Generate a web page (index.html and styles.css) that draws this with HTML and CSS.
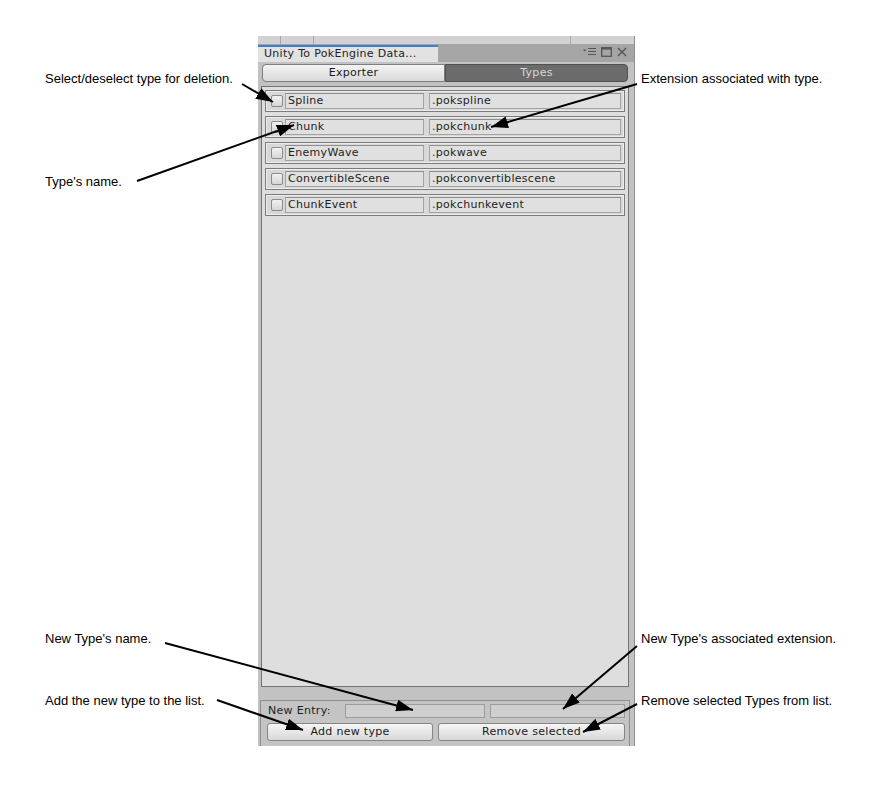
FILE: index.html
```html
<!DOCTYPE html>
<html>
<head>
<meta charset="utf-8">
<link rel="stylesheet" href="styles.css">
</head>
<body>
<div class="page">
  <div class="window">
    <div class="topstrip"><span class="tick t1"></span><span class="tick t2"></span><span class="tick t3"></span></div>
    <div class="titlebar">
      <div class="tab">Unity To PokEngine Data...</div>
      <div class="winicons">
        <svg width="13" height="9" viewBox="0 0 13 9"><path d="M0 2.5h3.5L1.75 4.5z" fill="#555"/><path d="M5 1.5h8M5 4.5h8M5 7.5h8" stroke="#555" stroke-width="1.2"/></svg>
        <svg width="11" height="10" viewBox="0 0 11 10"><rect x="0.7" y="0.7" width="9.6" height="8.6" fill="none" stroke="#555" stroke-width="1.3"/><path d="M0.7 1.8h9.6" stroke="#555" stroke-width="1.5"/></svg>
        <svg width="10" height="10" viewBox="0 0 10 10"><path d="M1 1L9 9M9 1L1 9" stroke="#555" stroke-width="1.4"/></svg>
      </div>
    </div>
    <div class="toolbar">
      <div class="seg seg-left">Exporter</div>
      <div class="seg seg-right">Types</div>
    </div>
    <div class="list">
      <div class="row"><span class="check"></span><span class="field name">Spline</span><span class="field ext">.pokspline</span></div>
      <div class="row"><span class="check"></span><span class="field name">Chunk</span><span class="field ext">.pokchunk</span></div>
      <div class="row"><span class="check"></span><span class="field name">EnemyWave</span><span class="field ext">.pokwave</span></div>
      <div class="row"><span class="check"></span><span class="field name">ConvertibleScene</span><span class="field ext">.pokconvertiblescene</span></div>
      <div class="row"><span class="check"></span><span class="field name">ChunkEvent</span><span class="field ext">.pokchunkevent</span></div>
    </div>
    <div class="bottom">
      <div class="entry">
        <span class="entry-label">New Entry:</span>
        <span class="efield ef1"></span>
        <span class="efield ef2"></span>
      </div>
      <div class="buttons">
        <div class="btn btn-add">Add new type</div>
        <div class="btn btn-remove">Remove selected</div>
      </div>
    </div>
  </div>

  <div class="note n1">Select/deselect type for deletion.</div>
  <div class="note n2">Type's name.</div>
  <div class="note n3">Extension associated with type.</div>
  <div class="note n4">New Type's name.</div>
  <div class="note n5">Add the new type to the list.</div>
  <div class="note n6">New Type's associated extension.</div>
  <div class="note n7">Remove selected Types from list.</div>

  <svg class="arrows" width="894" height="786" viewBox="0 0 894 786">
    <defs>
      <marker id="ah" markerWidth="17" markerHeight="12" refX="17" refY="6" orient="auto" markerUnits="userSpaceOnUse">
        <path d="M0 0L17 6L0 12z" fill="#000"/>
      </marker>
    </defs>
    <g stroke="#000" stroke-width="2" fill="none" marker-end="url(#ah)">
      <line x1="242" y1="84" x2="273" y2="102"/>
      <line x1="137" y1="181" x2="294" y2="125"/>
      <line x1="637" y1="84" x2="491" y2="127"/>
      <line x1="165" y1="643" x2="413" y2="710"/>
      <line x1="217" y1="700" x2="303" y2="730"/>
      <line x1="637" y1="646" x2="563" y2="709"/>
      <line x1="637" y1="704" x2="583" y2="732"/>
    </g>
  </svg>
</div>
</body>
</html>
```

FILE: styles.css
```css
* { box-sizing: border-box; }
html, body { margin: 0; padding: 0; background: #fff; }
.page {
  position: relative;
  width: 894px;
  height: 786px;
  padding-top: 36px;
  padding-left: 258px;
  font-family: "DejaVu Sans", sans-serif;
  font-size: 11px;
  letter-spacing: 0.3px;
  color: #1e1e1e;
}
.window {
  width: 377px;
  height: 710px;
  background: #c2c2c2;
  border-right: 1px solid #8e8e8e;
  display: flex;
  flex-direction: column;
}
.topstrip {
  position: relative;
  height: 8px;
  background: #d2d2d2;
}
.tick { position: absolute; top: 0; width: 1px; height: 8px; background: #a8a8a8; }
.t1 { left: 22px; }
.t2 { left: 55px; }
.t3 { left: 312px; }
.titlebar {
  height: 18px;
  background: #a5a5a5;
  display: flex;
  align-items: flex-end;
  justify-content: space-between;
}
.tab {
  width: 180px;
  height: 17px;
  background: #e2e2e2;
  border-top: 2px solid #3f7fd2;
  padding-left: 6px;
  line-height: 14px;
  color: #222;
  white-space: nowrap;
}
.winicons {
  display: flex;
  align-items: center;
  gap: 5px;
  height: 18px;
  padding-right: 7px;
  padding-bottom: 3px;
}
.toolbar {
  height: 24px;
  padding: 2px 6px 0 4px;
  display: flex;
}
.seg {
  height: 18px;
  line-height: 16px;
  text-align: center;
  flex: 1 1 0;
}
.seg-left {
  background: linear-gradient(#f4f4f4, #d9d9d9);
  border: 1px solid #7f7f7f;
  border-radius: 4px 0 0 4px;
  color: #1a1a1a;
}
.seg-right {
  background: #6b6b6b;
  border: 1px solid #505050;
  border-radius: 0 4px 4px 0;
  color: #d6d6d6;
}
.list {
  margin-left: 3px;
  width: 368px;
  height: 601px;
  border: 1px solid #737373;
  background: #dedede;
  padding: 3px 3px 0 3px;
  display: flex;
  flex-direction: column;
  gap: 4px;
}
.row {
  height: 22px;
  border: 1px solid #7c7c7c;
  box-shadow: inset 0 0 0 1px #ececec;
  background: #d8d8d8;
  display: flex;
  align-items: center;
  padding-left: 5px;
}
.check {
  width: 12px;
  height: 12px;
  border: 1px solid #8c8c8c;
  border-radius: 2px;
  background: linear-gradient(#f1f1f1, #d6d6d6);
  margin-right: 2px;
}
.field {
  height: 16px;
  border: 1px solid #a3a3a3;
  border-top-color: #8e8e8e;
  background: #e0e0e0;
  line-height: 14px;
  padding-left: 2px;
  white-space: nowrap;
}
.name { width: 139px; margin-right: 5px; }
.ext { width: 192px; }
.bottom {
  margin-top: 13px;
  margin-left: 2px;
  width: 370px;
  height: 46px;
  border: 1px solid #8f8f8f;
  border-bottom: none;
  background: #c4c4c4;
  padding: 3px 4px 0 6px;
}
.entry {
  display: flex;
  align-items: center;
  height: 14px;
}
.entry-label {
  width: 78px;
  padding-left: 1px;
  line-height: 14px;
}
.efield {
  height: 14px;
  border: 1px solid #9c9c9c;
  background: #cfcfcf;
}
.ef1 { width: 140px; margin-right: 5px; }
.ef2 { width: 135px; }
.buttons {
  display: flex;
  gap: 5px;
  margin-top: 5px;
}
.btn {
  height: 18px;
  border: 1px solid #858585;
  border-radius: 3px;
  background: linear-gradient(#f5f5f5, #d8d8d8);
  text-align: center;
  line-height: 16px;
  color: #1a1a1a;
}
.btn-add { width: 166px; }
.btn-remove { width: 187px; }
.note {
  position: absolute;
  font-family: "Liberation Sans", Arial, sans-serif;
  font-size: 13px;
  line-height: 15px;
  letter-spacing: 0;
  color: #000;
  white-space: nowrap;
}
.n1 { left: 45px; top: 71px; }
.n2 { left: 45px; top: 174px; }
.n3 { left: 641px; top: 71px; }
.n4 { left: 45px; top: 631px; }
.n5 { left: 45px; top: 693px; }
.n6 { left: 641px; top: 631px; }
.n7 { left: 641px; top: 693px; }
.arrows {
  position: absolute;
  left: 0;
  top: 0;
  pointer-events: none;
}
```
